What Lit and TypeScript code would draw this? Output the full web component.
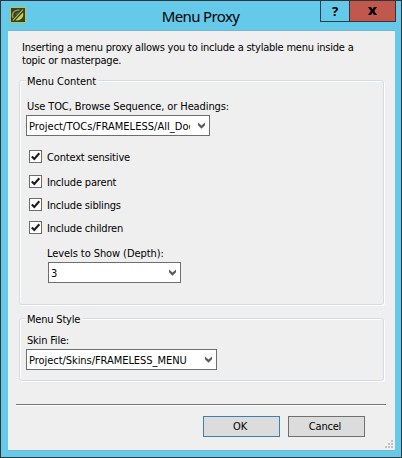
import { LitElement, html, css, svg } from "lit";
import { customElement, property } from "lit/decorators.js";

@customElement("check-row")
class CheckRow extends LitElement {
  static styles = css`
    :host { display: flex; height: 13px; align-items: center; letter-spacing: -0.17px; }
    svg { display: block; flex: none; margin-right: 5px; }
    span { line-height: 13px; padding-top: 2px; white-space: nowrap; }
  `;
  @property() label = "";
  render() {
    return html`<svg width="13" height="13" viewBox="0 0 13 13">
        <rect x="0.5" y="0.5" width="12" height="12" fill="#fff" stroke="#6c6c6c" />
        <path d="M2.8 6.4L5.3 9L10.3 3.2" fill="none" stroke="#1c1c1c" stroke-width="2.1" />
      </svg><span>${this.label}</span>`;
  }
}

@customElement("combo-box")
class ComboBox extends LitElement {
  static styles = css`
    :host { display: flex; box-sizing: border-box; height: 21px; border: 1px solid #6e6e6e; background: #fff; align-items: center; letter-spacing: -0.05px; }
    .value { flex: 1; min-width: 0; overflow: hidden; white-space: nowrap; margin-left: 2px; line-height: 17px; padding-top: 2px; }
    svg { display: block; flex: none; margin: 0 4px 0 8px; }
  `;
  @property() value = "";
  render() {
    return html`<div class="value">${this.value}</div>
      <svg width="7" height="7" viewBox="0 0 7 7">
        <path d="M0 0.4L3.5 3.6L7 0.4V3.2L3.5 6.7L0 3.2Z" fill="#5c5c5c" />
      </svg>`;
  }
}

@customElement("app-root")
class AppRoot extends LitElement {
  static styles = css`
    :host { display: block; width: 402px; height: 458px; color: #000;
      font: 11px/13px "DejaVu Sans Condensed", "DejaVu Sans", sans-serif; font-stretch: condensed; letter-spacing: -0.2px; }
    * { box-sizing: border-box; }
    .window { display: flex; flex-direction: column; width: 402px; height: 458px; border: 1px solid #34353a; background: #65c9ea; padding: 0 6px 6px 7px; }
    .bar { display: grid; grid-template-columns: 75px 1fr 78px; height: 29px; margin-right: -1px; }
    .logo { display: block; margin: 6px 0 0 2px; }
    .title { font: 15px/30px "Noto Sans", sans-serif; letter-spacing: -0.65px; text-align: center; white-space: nowrap; }
    .controls { display: flex; justify-self: end; height: 21px; }
    .ctl { display: flex; align-items: center; justify-content: center; border: 1px solid #27404b; border-top: 0; }
    .help { width: 29px; font: bold 13px/20px "Noto Sans", sans-serif; border-right: 0; }
    .close { width: 47px; background: #c1584e; border-color: #4b2c2a; }
    .body { flex: 1; display: flex; flex-direction: column; background: #efefef; border-top: 1px solid #7bb3c9; border-bottom: 1px solid #7bb3c9; padding: 10px 9px 0 8px; position: relative; }
    .intro { margin: 0 0 0 6px; white-space: nowrap; letter-spacing: -0.22px; }
    fieldset { margin: 0 2px 0 3px; padding: 0 0 0 6px; min-width: 0; border: 1px solid #d3dce4; border-radius: 3px; box-shadow: 1px 1px 0 #fff, inset 1px 1px 0 #fff; display: flex; flex-direction: column; align-items: flex-start; position: relative; }
    .legend { background: #efefef; padding: 0 2px 0 1px; margin-top: -6px; line-height: 13px; white-space: nowrap; }
    .content { height: 225px; margin-top: 13px; }
    .content .legend { letter-spacing: -0.05px; }
    .style { height: 63px; margin-top: 13px; }
    .label { white-space: nowrap; margin-left: 1px; }
    .source { margin-top: 12px; letter-spacing: -0.1px; }
    .file { margin-top: 8px; }
    .toc { width: 184px; margin-top: 2px; letter-spacing: 0.03px; }
    .checks { display: flex; flex-direction: column; gap: 10px; margin: 14px 0 0 3px; }
    .checks check-row:first-child { margin-bottom: 2px; }
    .levels { margin: 13px 0 0 21px; letter-spacing: -0.08px; }
    .depth { width: 133px; margin: 2px 0 0 22px; }
    .skin { width: 191px; margin-top: 2px; }
    .rule { height: 2px; border-top: 1px solid #777; border-bottom: 1px solid #fff; margin-top: 23px; }
    .actions { display: flex; justify-content: flex-end; gap: 8px; margin: 10px 21px 0 0; }
    .btn { width: 77px; height: 21px; border: 1px solid #707070; background: #dcdcdc; line-height: 20px; padding-right: 3px; text-align: center; }
    .ok { border-color: #3c7fb1; }
    .grip { position: absolute; right: 2px; bottom: 2px; }
  `;

  render() {
    const dots = [[6, 0], [3, 3], [6, 3], [0, 6], [3, 6], [6, 6]];
    return html`<div class="window">
      <div class="bar">
        <svg class="logo" width="16" height="16" viewBox="0 0 16 16">
          <rect x="0.5" y="0.5" width="15" height="15" fill="#383b36" stroke="#b5cc38" />
          <path d="M3.2 11C1 7 4 2.5 9.5 3" fill="none" stroke="#8a9a42" stroke-width="1.6" />
          <path d="M5 8.5L8.5 4.5L7.5 7Z" fill="#77863b" />
          <path d="M5.5 13.2C10 14.5 14.5 10.5 13 5.5Z" fill="#c2d83d" />
          <path d="M3 13.5L13 2.5" stroke="#c2d83d" stroke-width="1.1" />
        </svg>
        <div class="title">Menu Proxy</div>
        <div class="controls">
          <div class="ctl help">?</div>
          <div class="ctl close"><svg width="9" height="8" viewBox="0 0 9 8">
            <path d="M0 0H3L4.5 2.3L6 0H9L6.2 4L9 8H6L4.5 5.7L3 8H0L2.8 4Z" fill="#000" />
          </svg></div>
        </div>
      </div>
      <div class="body">
        <div class="intro">Inserting a menu proxy allows you to include a stylable menu inside a<br />topic or masterpage.</div>
        <fieldset class="content">
          <div class="legend">Menu Content</div>
          <div class="label source">Use TOC, Browse Sequence, or Headings:</div>
          <combo-box class="toc" value="Project/TOCs/FRAMELESS/All_Doc"></combo-box>
          <div class="checks">
            ${["Context sensitive", "Include parent", "Include siblings", "Include children"].map(
              (label) => html`<check-row label=${label}></check-row>`
            )}
          </div>
          <div class="label levels">Levels to Show (Depth):</div>
          <combo-box class="depth" value="3"></combo-box>
        </fieldset>
        <fieldset class="style">
          <div class="legend">Menu Style</div>
          <div class="label file">Skin File:</div>
          <combo-box class="skin" value="Project/Skins/FRAMELESS_MENU"></combo-box>
        </fieldset>
        <div class="rule"></div>
        <div class="actions">
          <div class="btn ok">OK</div>
          <div class="btn">Cancel</div>
        </div>
        <svg class="grip" width="8" height="8" viewBox="0 0 8 8">
          ${dots.map(([x, y]) => svg`<rect x=${x} y=${y} width="2" height="2" fill="#c2c2c2" />`)}
        </svg>
      </div>
    </div>`;
  }
}
